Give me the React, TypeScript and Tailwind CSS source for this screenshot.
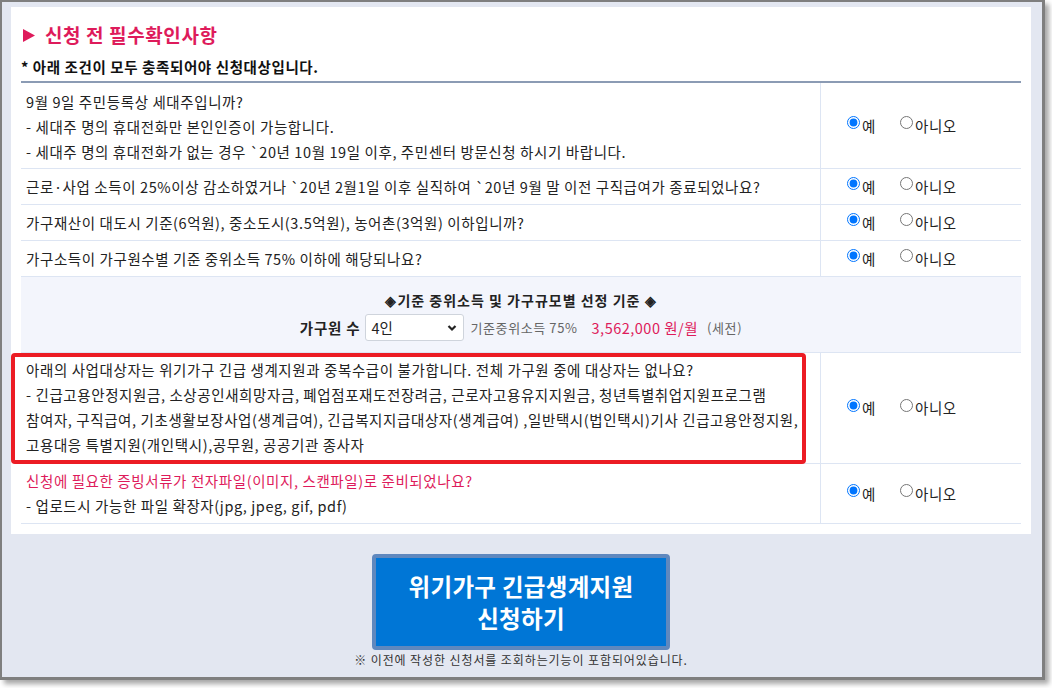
import { useState } from 'react';

const FONT = '"Noto Sans CJK KR", "Noto Sans", "Liberation Sans", sans-serif';

type Q = { id: string; lines: string[]; red?: boolean; box?: boolean; pt: string; pb: string };

const QUESTIONS_TOP: Q[] = [
  {
    id: 'q1',
    lines: [
      '9월 9일 주민등록상 세대주입니까?',
      '- 세대주 명의 휴대전화만 본인인증이 가능합니다.',
      '- 세대주 명의 휴대전화가 없는 경우 `20년 10월 19일 이후, 주민센터 방문신청 하시기 바랍니다.',
    ],
    pt: 'pt-[6px]', pb: 'pb-[4px]',
  },
  { id: 'q2', lines: ['근로·사업 소득이 25%이상 감소하였거나 `20년 2월1일 이후 실직하여 `20년 9월 말 이전 구직급여가 종료되었나요?'], pt: 'pt-[5px]', pb: 'pb-[5px]' },
  { id: 'q3', lines: ['가구재산이 대도시 기준(6억원), 중소도시(3.5억원), 농어촌(3억원) 이하입니까?'], pt: 'pt-[5px]', pb: 'pb-[5px]' },
  { id: 'q4', lines: ['가구소득이 가구원수별 기준 중위소득 75% 이하에 해당되나요?'], pt: 'pt-[5px]', pb: 'pb-[5px]' },
];

const QUESTIONS_BOTTOM: Q[] = [
  {
    id: 'q5',
    lines: [
      '아래의 사업대상자는 위기가구 긴급 생계지원과 중복수급이 불가합니다. 전체 가구원 중에 대상자는 없나요?',
      '- 긴급고용안정지원금, 소상공인새희망자금, 폐업점포재도전장려금, 근로자고용유지지원금, 청년특별취업지원프로그램',
      '참여자, 구직급여, 기초생활보장사업(생계급여), 긴급복지지급대상자(생계급여) ,일반택시(법인택시)기사 긴급고용안정지원,',
      '고용대응 특별지원(개인택시),공무원, 공공기관 종사자',
    ],
    box: true,
    pt: 'pt-[4px]', pb: 'pb-[6px]',
  },
  {
    id: 'q6',
    lines: ['신청에 필요한 증빙서류가 전자파일(이미지, 스캔파일)로 준비되었나요?', '- 업로드시 가능한 파일 확장자(jpg, jpeg, gif, pdf)'],
    red: true,
    pt: 'pt-[4px]', pb: 'pb-[5px]',
  },
];

function Row({ q, value, onChange }: { q: Q; value: string; onChange: (v: string) => void }) {
  return (
    <div className="flex border-b border-[#dde5f3]">
      <div className={`relative w-[800px] border-r border-[#dde5f3] px-[5px] ${q.pt} ${q.pb}`}>
        {q.lines.map((l, i) => (
          <div
            key={i}
            className={`leading-[25px] text-[14.5px] tracking-[0.6px] whitespace-nowrap ${q.red && i === 0 ? 'text-[#de1b5b]' : 'text-[#222]'}`}
          >
            {l}
          </div>
        ))}
        {q.box && (
          <div className="absolute left-[-10px] right-[14px] top-0 bottom-[-1px] border-[4px] border-[#ec1c24] rounded-[4px] pointer-events-none" />
        )}
      </div>
      <div className="flex-1 flex items-center pl-[26px] text-[14.5px] tracking-[0.6px] text-[#222]">
        <label className="flex items-center">
          <input type="radio" name={q.id} checked={value === 'y'} onChange={() => onChange('y')} className="w-[13px] h-[13px] m-0 mt-[-6px] mr-[2px]" />
          <span>예</span>
        </label>
        <label className="flex items-center ml-[24px]">
          <input type="radio" name={q.id} checked={value === 'n'} onChange={() => onChange('n')} className="w-[13px] h-[13px] m-0 mt-[-6px] mr-[2px]" />
          <span>아니오</span>
        </label>
      </div>
    </div>
  );
}

export default function App() {
  const [answers, setAnswers] = useState<Record<string, string>>({ q1: 'y', q2: 'y', q3: 'y', q4: 'y', q5: 'y', q6: 'y' });
  const [members, setMembers] = useState('4');
  const set = (id: string) => (v: string) => setAnswers(p => ({ ...p, [id]: v }));

  return (
    <div className="w-[1052px] h-[688px] bg-white overflow-hidden" style={{ fontFamily: FONT }}>
      <div className="w-[1045px] h-[680px] bg-[#e3e7f1] border-l-2 border-t-2 border-r-[3px] border-b-[3px] border-[#7f7f7f] shadow-[4px_4px_5px_rgba(0,0,0,0.35)] pl-[9px] pt-[5px]">
        {/* white panel */}
        <div className="w-[1020px] h-[527px] bg-white px-[10px] pt-[16px]">
          <div className="flex items-center h-[24px] pl-[2px]">
            <svg width="12" height="13" viewBox="0 0 12 13" className="mr-[10px] mt-[1px]">
              <path d="M0 0 L12 6.5 L0 13 Z" fill="#de1b5b" />
            </svg>
            <span className="text-[19px] tracking-[0.6px] font-bold text-[#de1b5b]">신청 전 필수확인사항</span>
          </div>
          <div className="mt-[10px] h-[20px] leading-[20px] text-[14.5px] tracking-[0.6px] font-bold text-[#111]">
            * 아래 조건이 모두 충족되어야 신청대상입니다.
          </div>
          <div className="mt-[4px] border-t-2 border-[#8b9bb4]">
            {QUESTIONS_TOP.map(q => (
              <Row key={q.id} q={q} value={answers[q.id]} onChange={set(q.id)} />
            ))}
            {/* selection criteria row */}
            <div className="h-[76px] bg-[#f3f5fc] border-b border-[#dde5f3] flex flex-col items-center pt-[13px]">
              <div className="text-[14px] tracking-[1px] font-bold text-[#222] leading-[20px]">◈기준 중위소득 및 가구규모별 선정 기준 ◈</div>
              <div className="flex items-center mt-[4px] h-[27px]">
                <span className="text-[14.5px] tracking-[0.8px] font-bold text-[#222] mr-[5px]">가구원 수</span>
                <div className="relative w-[99px] h-[27px] border border-[#cfd4dc] rounded-[3px] bg-white">
                  <select
                    value={members}
                    onChange={e => setMembers(e.target.value)}
                    className="appearance-none w-full h-full bg-transparent pl-[5px] text-[14.5px] text-[#222] outline-none"
                  >
                    {[1, 2, 3, 4, 5, 6].map(n => <option key={n} value={n}>{n}인</option>)}
                  </select>
                  <svg className="absolute right-[6px] top-[9px] pointer-events-none" width="10" height="8" viewBox="0 0 10 8">
                    <path d="M1.5 2 L5 5.5 L8.5 2" fill="none" stroke="#222" strokeWidth="2.2" />
                  </svg>
                </div>
                <span className="ml-[6px] text-[13px] tracking-[0.6px] text-[#666]">기준중위소득 75%</span>
                <span className="ml-[14px] text-[14.5px] tracking-[0.5px] text-[#de1b5b]">3,562,000 원/월</span>
                <span className="ml-[9px] text-[13px] tracking-[0.6px] text-[#666]">(세전)</span>
              </div>
            </div>
            {QUESTIONS_BOTTOM.map(q => (
              <Row key={q.id} q={q} value={answers[q.id]} onChange={set(q.id)} />
            ))}
          </div>
        </div>

        {/* submit */}
        <div className="w-[1020px] flex flex-col items-center pt-[20px]">
          <button className="w-[298px] h-[96px] bg-[#0076d6] border-[4px] border-[#5f88be] rounded-[4px] text-white text-[23.5px] tracking-[0.3px] font-bold leading-[32px]">
            위기가구 긴급생계지원
            <br />
            신청하기
          </button>
          <div className="text-[12px] tracking-[0.9px] text-[#333] leading-[18px] mt-[1px]">※ 이전에 작성한 신청서를 조회하는기능이 포함되어있습니다.</div>
        </div>
      </div>
    </div>
  );
}
